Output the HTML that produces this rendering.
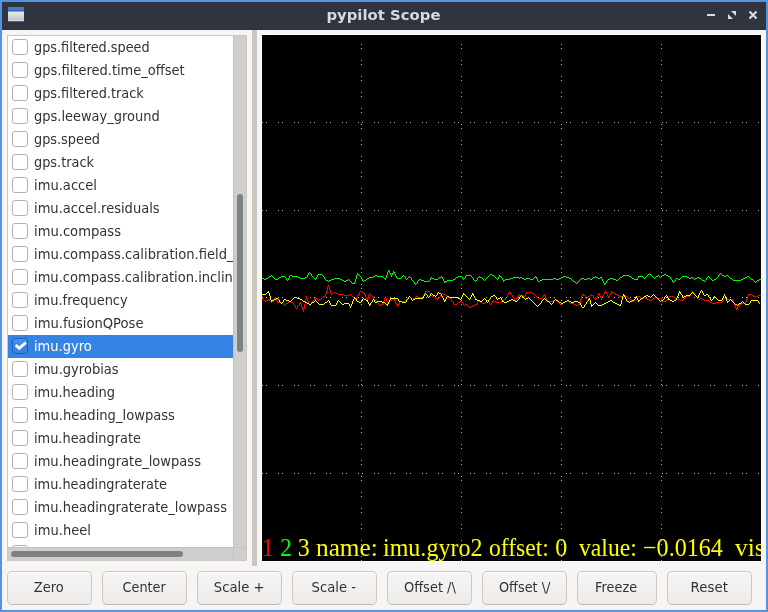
<!DOCTYPE html>
<html lang="en">
<head>
<meta charset="utf-8">
<title>pypilot Scope</title>
<style>
html,body{margin:0;padding:0;}
body{width:768px;height:612px;overflow:hidden;background:#5294e2;position:relative;font-family:"DejaVu Sans","Liberation Sans",sans-serif;font-size:13.33px;color:#2e3436;}
#root{position:absolute;left:0;top:0;width:768px;height:612px;will-change:transform;}
#win{position:absolute;left:2px;top:2px;width:764px;height:608px;background:#f6f5f4;}
#title{position:absolute;left:2px;top:2px;width:764px;height:28px;background:#2f343f;}
#title .t{position:absolute;left:0;right:0;top:0;height:28px;line-height:26px;text-align:center;font-weight:bold;font-size:14.667px;color:#d3dae3;}
#ticon{position:absolute;left:6px;top:5px;width:16px;height:15px;}
.wb{position:absolute;top:0;}
#list{position:absolute;left:7px;top:35px;width:238px;height:524px;border:1px solid #cdc7c2;background:#fff;overflow:hidden;}
#rows{position:absolute;left:0;top:0;width:225px;height:511px;overflow:hidden;background:#fff;}
.row{height:23px;line-height:23px;white-space:nowrap;padding-left:26px;position:relative;}
.row.sel{background:#3584e4;color:#fff;}
.sx{display:inline-block;transform-origin:0 50%;white-space:pre;}
.sx.c{transform-origin:50% 50%;}
.cb{position:absolute;left:4px;top:3px;width:14px;height:14px;border:1px solid #b9b1a9;border-radius:3px;background:#fff;}
.cb.on{background:linear-gradient(#4b93ea,#3584e4 55%);border-color:#1b62b6;}
.cb.on svg{position:absolute;left:-1px;top:-1px;}
#vs{position:absolute;left:225px;top:0;width:12px;height:511px;background:#cecece;border-left:1px solid #c4bfb9;}
#vs i{position:absolute;left:3px;top:158px;width:6px;height:158px;border-radius:3px;background:#7e8182;}
#hs{position:absolute;left:0;top:511px;width:225px;height:12px;background:#cecece;border-top:1px solid #c4bfb9;}
#hs i{position:absolute;left:3px;top:3px;width:172px;height:6px;border-radius:3px;background:#7e8182;}
#corner{position:absolute;left:225px;top:511px;width:12px;height:12px;background:#cecece;border-left:1px solid #c7c2bd;border-top:1px solid #c7c2bd;}
#sash{position:absolute;left:252px;top:30px;width:5px;height:536px;background:#cbc6c0;}
#cv{position:absolute;left:261px;top:34px;width:499px;height:526px;border:1px solid #fff;background:#000;overflow:hidden;}
#cv svg{position:absolute;left:0;top:0;}
#cv .txt span{position:absolute;top:0;display:inline-block;transform-origin:0 22px;white-space:pre;}
#cv .txt{position:absolute;left:0;top:499px;width:499px;height:28px;white-space:pre;font-family:"Liberation Serif",serif;font-size:24px;line-height:28px;color:#ff0;}
.btn{position:absolute;top:571px;height:32px;line-height:31px;text-align:center;border:1px solid #cdc7c2;border-bottom-color:#bfb8b1;border-radius:5px;background:linear-gradient(#f6f5f4,#edebe9);box-sizing:border-box;height:34px;box-shadow:inset 0 1px rgba(255,255,255,0.8);}
</style>
</head>
<body>
<div id="root">
<div id="win"></div>
<div id="title">
<svg id="ticon" viewBox="0 0 16 15"><defs><linearGradient id="g1" x1="0" y1="0" x2="0" y2="1"><stop offset="0" stop-color="#ececec"/><stop offset="0.85" stop-color="#c8c8c8"/><stop offset="1" stop-color="#e4e2dc"/></linearGradient><linearGradient id="g2" x1="0" y1="0" x2="0" y2="1"><stop offset="0" stop-color="#4d7fc6"/><stop offset="1" stop-color="#3a6cb4"/></linearGradient></defs><rect x="0" y="0" width="16" height="15" fill="#3768b0"/><rect x="0" y="0" width="16" height="4.6" fill="url(#g2)"/><rect x="0" y="4.6" width="16" height="9.4" fill="url(#g1)"/></svg>
<div class="t"><span class="sx c" style="transform:translate(-0.8px,0px) scaleX(1.0142)">pypilot Scope</span></div>
<svg class="wb" style="left:700px" width="64" height="28" viewBox="0 0 64 28"><g fill="#d8dde5"><rect x="5" y="12" width="8" height="2"/><path d="M29 9 H34 V14 Z"/><path d="M26 12 V17 H31 Z"/><path d="M47.5 9.5 L54.5 16.5 M54.5 9.5 L47.5 16.5" stroke="#d8dde5" stroke-width="2.1" stroke-linecap="butt" fill="none"/></g></svg>
</div>
<div id="list">
<div id="rows">
<div class="row"><span class="cb"></span><span class="sx" style="transform:translate(0px,0px) scaleX(0.9642)">gps.filtered.speed</span></div>
<div class="row"><span class="cb"></span><span class="sx" style="transform:translate(0px,0px) scaleX(0.9771)">gps.filtered.time_offset</span></div>
<div class="row"><span class="cb"></span><span class="sx" style="transform:translate(0px,0px) scaleX(0.9652)">gps.filtered.track</span></div>
<div class="row"><span class="cb"></span><span class="sx" style="transform:translate(0px,0px) scaleX(0.9743)">gps.leeway_ground</span></div>
<div class="row"><span class="cb"></span><span class="sx" style="transform:translate(0px,0px) scaleX(0.9651)">gps.speed</span></div>
<div class="row"><span class="cb"></span><span class="sx" style="transform:translate(0px,0px) scaleX(0.9671)">gps.track</span></div>
<div class="row"><span class="cb"></span><span class="sx" style="transform:translate(0px,0px) scaleX(0.9825)">imu.accel</span></div>
<div class="row"><span class="cb"></span><span class="sx" style="transform:translate(0px,0px) scaleX(0.9811)">imu.accel.residuals</span></div>
<div class="row"><span class="cb"></span><span class="sx" style="transform:translate(0px,0px) scaleX(0.9843)">imu.compass</span></div>
<div class="row"><span class="cb"></span><span class="sx" style="transform:translate(0px,0px) scaleX(0.9841)">imu.compass.calibration.field_strength</span></div>
<div class="row"><span class="cb"></span><span class="sx" style="transform:translate(0px,0px) scaleX(0.9811)">imu.compass.calibration.inclination</span></div>
<div class="row"><span class="cb"></span><span class="sx" style="transform:translate(0px,0px) scaleX(0.9736)">imu.frequency</span></div>
<div class="row"><span class="cb"></span><span class="sx" style="transform:translate(0px,0px) scaleX(0.9854)">imu.fusionQPose</span></div>
<div class="row sel"><span class="cb on"><svg viewBox="0 0 16 16" width="16" height="16"><path d="M2.7 7.9 L4.5 5.9 L7.2 8.3 L12.9 3.8 L14.9 5.4 L7.2 12.3 Z" fill="#fff"/></svg></span><span class="sx" style="transform:translate(0px,0px) scaleX(0.9769)">imu.gyro</span></div>
<div class="row"><span class="cb"></span><span class="sx" style="transform:translate(0px,0px) scaleX(0.9809)">imu.gyrobias</span></div>
<div class="row"><span class="cb"></span><span class="sx" style="transform:translate(0px,0px) scaleX(0.9726)">imu.heading</span></div>
<div class="row"><span class="cb"></span><span class="sx" style="transform:translate(0px,0px) scaleX(0.9843)">imu.heading_lowpass</span></div>
<div class="row"><span class="cb"></span><span class="sx" style="transform:translate(0px,0px) scaleX(0.9695)">imu.headingrate</span></div>
<div class="row"><span class="cb"></span><span class="sx" style="transform:translate(0px,0px) scaleX(0.9805)">imu.headingrate_lowpass</span></div>
<div class="row"><span class="cb"></span><span class="sx" style="transform:translate(0px,0px) scaleX(0.9676)">imu.headingraterate</span></div>
<div class="row"><span class="cb"></span><span class="sx" style="transform:translate(0px,0px) scaleX(0.9777)">imu.headingraterate_lowpass</span></div>
<div class="row"><span class="cb"></span><span class="sx" style="transform:translate(0px,0px) scaleX(0.9838)">imu.heel</span></div>
<div class="row"><span class="cb"></span><span class="sx" style="transform:translate(0px,0px) scaleX(0.9924)">imu.heel_lowpass</span></div>
</div>
<div id="vs"><i></i></div>
<div id="hs"><i></i></div>
<div id="corner"></div>
</div>
<div id="sash"></div>
<div id="cv">
<svg width="499" height="526" viewBox="0 0 499 526" shape-rendering="crispEdges">
<g fill="none" stroke-width="1">
<path d="M0.5 263v1M1.5 264v1M2.5 265v1M3.5 266v1M4.5 265v1M5.5 265v1M6.5 264v1M7.5 265v1M8.5 266v1M9.5 267v1M10.5 266v1M11.5 264v2M12.5 263v1M13.5 262v2M14.5 264v2M15.5 266v2M16.5 267v1M17.5 267v1M18.5 267v1M19.5 267v1M20.5 268v1M21.5 269v1M22.5 270v1M23.5 269v1M24.5 268v1M25.5 268v1M26.5 267v1M27.5 266v1M28.5 266v1M29.5 267v1M30.5 267v1M31.5 268v2M32.5 270v1M33.5 271v2M34.5 273v1M35.5 271v2M36.5 270v1M37.5 268v2M38.5 267v2M39.5 269v3M40.5 272v3M41.5 274v3M42.5 269v5M43.5 264v5M44.5 261v3M45.5 263v3M46.5 266v3M47.5 269v2M48.5 269v1M49.5 267v2M50.5 266v1M51.5 265v1M52.5 263v2M53.5 262v1M54.5 263v1M55.5 264v1M56.5 265v1M57.5 264v1M58.5 264v1M59.5 263v1M60.5 262v1M61.5 261v1M62.5 261v1M63.5 259v2M64.5 256v3M65.5 252v4M66.5 250v2M67.5 252v3M68.5 255v3M69.5 258v2M70.5 258v1M71.5 258v1M72.5 257v1M73.5 257v1M74.5 258v1M75.5 258v1M76.5 259v1M77.5 259v1M78.5 259v1M79.5 259v1M80.5 259v1M81.5 259v1M82.5 260v1M83.5 260v1M84.5 260v1M85.5 260v1M86.5 260v1M87.5 259v1M88.5 259v1M89.5 260v1M90.5 261v1M91.5 262v1M92.5 263v1M93.5 264v1M94.5 262v2M95.5 261v1M96.5 259v2M97.5 257v2M98.5 256v1M99.5 256v1M100.5 257v1M101.5 257v1M102.5 258v2M103.5 260v2M104.5 262v2M105.5 264v2M106.5 260v4M107.5 258v2M108.5 259v1M109.5 260v1M110.5 261v1M111.5 262v2M112.5 264v1M113.5 265v1M114.5 266v1M115.5 267v1M116.5 268v2M117.5 270v1M118.5 270v1M119.5 269v1M120.5 268v2M121.5 266v2M122.5 263v3M123.5 261v2M124.5 263v4M125.5 267v3M126.5 268v1M127.5 266v2M128.5 265v1M129.5 265v1M130.5 264v1M131.5 264v1M132.5 264v2M133.5 266v2M134.5 268v2M135.5 270v2M136.5 269v2M137.5 267v2M138.5 266v1M139.5 266v1M140.5 266v1M141.5 266v1M142.5 266v1M143.5 265v1M144.5 264v1M145.5 263v1M146.5 262v1M147.5 261v1M148.5 262v1M149.5 263v2M150.5 265v1M151.5 264v1M152.5 263v1M153.5 262v1M154.5 261v1M155.5 261v1M156.5 262v1M157.5 262v1M158.5 262v1M159.5 263v1M160.5 262v2M161.5 260v2M162.5 258v2M163.5 256v2M164.5 256v1M165.5 256v1M166.5 256v1M167.5 257v1M168.5 258v2M169.5 260v1M170.5 261v1M171.5 261v1M172.5 262v1M173.5 263v1M174.5 263v1M175.5 264v1M176.5 263v1M177.5 262v1M178.5 260v2M179.5 259v1M180.5 258v1M181.5 259v1M182.5 259v1M183.5 260v1M184.5 260v1M185.5 261v1M186.5 262v1M187.5 262v1M188.5 263v1M189.5 264v2M190.5 266v1M191.5 267v2M192.5 269v1M193.5 269v1M194.5 269v1M195.5 268v1M196.5 267v1M197.5 267v1M198.5 266v1M199.5 267v1M200.5 267v1M201.5 268v2M202.5 270v1M203.5 269v1M204.5 269v1M205.5 270v1M206.5 271v1M207.5 272v1M208.5 272v1M209.5 271v1M210.5 271v1M211.5 270v1M212.5 270v1M213.5 269v1M214.5 269v1M215.5 267v2M216.5 265v2M217.5 266v1M218.5 267v1M219.5 267v1M220.5 268v1M221.5 268v1M222.5 268v1M223.5 267v1M224.5 266v1M225.5 265v1M226.5 266v1M227.5 267v2M228.5 269v1M229.5 268v1M230.5 266v2M231.5 265v1M232.5 266v1M233.5 266v1M234.5 267v1M235.5 267v1M236.5 267v1M237.5 267v1M238.5 267v1M239.5 266v1M240.5 266v1M241.5 265v1M242.5 264v1M243.5 263v1M244.5 262v1M245.5 260v2M246.5 258v2M247.5 256v2M248.5 257v2M249.5 259v1M250.5 260v2M251.5 262v1M252.5 263v2M253.5 265v1M254.5 263v2M255.5 262v1M256.5 260v2M257.5 259v1M258.5 260v1M259.5 260v1M260.5 260v1M261.5 261v1M262.5 261v1M263.5 259v2M264.5 257v2M265.5 257v1M266.5 257v1M267.5 257v1M268.5 257v1M269.5 257v1M270.5 258v1M271.5 258v1M272.5 259v1M273.5 260v1M274.5 261v1M275.5 262v1M276.5 263v1M277.5 263v1M278.5 263v1M279.5 263v1M280.5 262v1M281.5 260v2M282.5 259v2M283.5 261v2M284.5 263v2M285.5 265v2M286.5 266v1M287.5 266v1M288.5 266v1M289.5 266v1M290.5 266v1M291.5 265v1M292.5 265v1M293.5 264v1M294.5 265v1M295.5 266v1M296.5 267v1M297.5 268v1M298.5 269v1M299.5 268v1M300.5 268v1M301.5 267v1M302.5 267v1M303.5 266v1M304.5 266v1M305.5 265v1M306.5 266v1M307.5 267v1M308.5 268v1M309.5 268v1M310.5 268v1M311.5 268v1M312.5 269v1M313.5 269v1M314.5 270v1M315.5 270v1M316.5 269v1M317.5 268v2M318.5 264v4M319.5 261v3M320.5 259v2M321.5 259v1M322.5 260v1M323.5 261v2M324.5 263v1M325.5 262v1M326.5 261v1M327.5 261v1M328.5 260v1M329.5 259v1M330.5 260v1M331.5 261v2M332.5 263v1M333.5 264v1M334.5 262v2M335.5 260v2M336.5 258v2M337.5 259v2M338.5 261v2M339.5 263v2M340.5 261v2M341.5 259v2M342.5 257v2M343.5 255v2M344.5 257v2M345.5 259v2M346.5 261v2M347.5 260v2M348.5 258v2M349.5 256v2M350.5 257v1M351.5 257v1M352.5 258v1M353.5 259v1M354.5 259v1M355.5 260v1M356.5 260v1M357.5 261v1M358.5 261v1M359.5 262v1M360.5 262v1M361.5 262v1M362.5 261v1M363.5 261v1M364.5 261v1M365.5 262v1M366.5 263v1M367.5 263v1M368.5 264v1M369.5 265v1M370.5 266v1M371.5 266v1M372.5 265v1M373.5 263v2M374.5 262v1M375.5 261v1M376.5 261v1M377.5 261v1M378.5 262v2M379.5 264v1M380.5 263v1M381.5 263v1M382.5 262v1M383.5 263v1M384.5 263v1M385.5 264v1M386.5 264v1M387.5 265v1M388.5 265v1M389.5 265v1M390.5 264v1M391.5 263v1M392.5 263v1M393.5 262v1M394.5 262v1M395.5 263v1M396.5 263v1M397.5 263v1M398.5 263v1M399.5 264v2M400.5 266v1M401.5 266v1M402.5 266v1M403.5 266v1M404.5 265v1M405.5 263v2M406.5 262v1M407.5 261v1M408.5 261v1M409.5 261v1M410.5 261v1M411.5 261v1M412.5 262v1M413.5 263v1M414.5 263v1M415.5 264v1M416.5 264v1M417.5 264v1M418.5 265v1M419.5 265v1M420.5 265v1M421.5 264v1M422.5 263v1M423.5 262v1M424.5 261v1M425.5 261v1M426.5 261v1M427.5 261v1M428.5 259v2M429.5 257v2M430.5 256v1M431.5 257v1M432.5 258v2M433.5 260v1M434.5 261v1M435.5 262v2M436.5 264v1M437.5 264v1M438.5 263v1M439.5 263v1M440.5 264v1M441.5 264v1M442.5 265v1M443.5 265v1M444.5 265v1M445.5 265v1M446.5 265v1M447.5 266v1M448.5 267v1M449.5 267v1M450.5 268v1M451.5 268v1M452.5 268v1M453.5 268v1M454.5 267v1M455.5 267v1M456.5 267v1M457.5 267v1M458.5 267v1M459.5 267v1M460.5 266v1M461.5 264v2M462.5 263v1M463.5 263v1M464.5 264v1M465.5 264v1M466.5 264v1M467.5 264v1M468.5 264v1M469.5 264v1M470.5 264v2M471.5 266v2M472.5 268v3M473.5 271v2M474.5 273v2M475.5 272v2M476.5 270v2M477.5 269v1M478.5 269v1M479.5 268v1M480.5 268v1M481.5 268v1M482.5 268v1M483.5 267v2M484.5 264v3M485.5 261v3M486.5 259v2M487.5 259v1M488.5 259v1M489.5 259v1M490.5 260v1M491.5 261v1M492.5 261v1M493.5 262v1M494.5 261v1M495.5 261v1M496.5 260v1M497.5 260v1M498.5 260v1" stroke="#f00"/>
<path d="M0.5 243v1M1.5 243v1M2.5 244v1M3.5 244v1M4.5 243v1M5.5 243v1M6.5 242v1M7.5 241v1M8.5 241v1M9.5 240v1M10.5 241v1M11.5 242v1M12.5 243v1M13.5 244v1M14.5 244v1M15.5 244v1M16.5 243v1M17.5 242v1M18.5 242v1M19.5 241v1M20.5 241v1M21.5 241v1M22.5 241v1M23.5 242v1M24.5 243v2M25.5 245v1M26.5 243v2M27.5 241v2M28.5 240v1M29.5 240v1M30.5 241v1M31.5 241v1M32.5 241v1M33.5 241v1M34.5 241v1M35.5 241v1M36.5 242v1M37.5 242v1M38.5 243v1M39.5 243v1M40.5 243v1M41.5 243v1M42.5 243v1M43.5 242v1M44.5 242v1M45.5 240v2M46.5 238v2M47.5 237v1M48.5 238v1M49.5 239v2M50.5 241v1M51.5 242v1M52.5 243v1M53.5 244v1M54.5 242v2M55.5 240v2M56.5 239v1M57.5 239v1M58.5 239v1M59.5 239v1M60.5 240v1M61.5 241v1M62.5 242v2M63.5 244v1M64.5 245v1M65.5 245v1M66.5 246v1M67.5 245v1M68.5 245v1M69.5 244v1M70.5 244v1M71.5 244v1M72.5 243v1M73.5 243v1M74.5 243v1M75.5 243v1M76.5 243v1M77.5 243v1M78.5 244v1M79.5 244v1M80.5 245v1M81.5 245v1M82.5 246v1M83.5 246v1M84.5 245v1M85.5 245v1M86.5 244v1M87.5 245v1M88.5 246v1M89.5 247v1M90.5 248v1M91.5 248v1M92.5 247v2M93.5 244v3M94.5 240v4M95.5 238v2M96.5 239v1M97.5 240v1M98.5 241v1M99.5 242v2M100.5 244v2M101.5 246v1M102.5 245v1M103.5 245v1M104.5 244v1M105.5 243v1M106.5 243v1M107.5 242v1M108.5 242v1M109.5 242v1M110.5 242v1M111.5 241v1M112.5 241v1M113.5 240v1M114.5 240v1M115.5 241v1M116.5 241v1M117.5 241v1M118.5 241v1M119.5 241v1M120.5 241v1M121.5 242v1M122.5 243v1M123.5 243v2M124.5 240v3M125.5 237v3M126.5 235v2M127.5 236v2M128.5 238v2M129.5 240v2M130.5 238v2M131.5 236v2M132.5 237v2M133.5 239v2M134.5 241v2M135.5 243v1M136.5 243v1M137.5 243v1M138.5 243v1M139.5 242v1M140.5 241v1M141.5 240v1M142.5 241v1M143.5 242v2M144.5 244v1M145.5 243v1M146.5 242v1M147.5 241v1M148.5 242v1M149.5 243v2M150.5 245v1M151.5 246v1M152.5 247v2M153.5 249v1M154.5 248v1M155.5 246v2M156.5 245v1M157.5 244v1M158.5 244v1M159.5 245v1M160.5 245v1M161.5 245v1M162.5 246v1M163.5 246v1M164.5 246v1M165.5 246v1M166.5 246v1M167.5 245v1M168.5 243v2M169.5 242v1M170.5 243v1M171.5 243v1M172.5 244v1M173.5 244v1M174.5 244v1M175.5 244v1M176.5 243v1M177.5 242v1M178.5 242v1M179.5 241v1M180.5 242v2M181.5 244v2M182.5 246v2M183.5 246v1M184.5 246v1M185.5 245v1M186.5 245v1M187.5 245v1M188.5 245v1M189.5 245v1M190.5 245v1M191.5 244v1M192.5 244v1M193.5 243v1M194.5 242v1M195.5 242v1M196.5 241v1M197.5 241v1M198.5 241v1M199.5 241v1M200.5 242v2M201.5 244v1M202.5 243v1M203.5 241v2M204.5 240v1M205.5 240v1M206.5 240v1M207.5 240v1M208.5 240v1M209.5 241v1M210.5 242v1M211.5 243v2M212.5 245v1M213.5 246v1M214.5 245v1M215.5 243v2M216.5 242v1M217.5 241v1M218.5 242v1M219.5 242v1M220.5 243v1M221.5 244v1M222.5 245v1M223.5 244v1M224.5 243v1M225.5 242v1M226.5 241v1M227.5 240v1M228.5 239v1M229.5 239v1M230.5 240v1M231.5 240v1M232.5 241v1M233.5 242v1M234.5 243v1M235.5 244v1M236.5 242v2M237.5 240v2M238.5 241v1M239.5 242v1M240.5 243v2M241.5 245v2M242.5 245v1M243.5 244v1M244.5 244v1M245.5 244v1M246.5 244v1M247.5 244v1M248.5 243v1M249.5 243v1M250.5 243v1M251.5 242v1M252.5 242v1M253.5 242v1M254.5 242v1M255.5 242v1M256.5 242v1M257.5 243v1M258.5 242v1M259.5 242v1M260.5 243v1M261.5 243v1M262.5 244v1M263.5 244v1M264.5 243v1M265.5 243v1M266.5 243v1M267.5 243v1M268.5 244v1M269.5 244v1M270.5 244v1M271.5 243v1M272.5 242v1M273.5 241v1M274.5 242v2M275.5 244v2M276.5 246v1M277.5 246v1M278.5 245v1M279.5 245v1M280.5 244v1M281.5 244v1M282.5 244v1M283.5 244v1M284.5 244v1M285.5 244v1M286.5 244v1M287.5 244v1M288.5 244v1M289.5 244v1M290.5 244v1M291.5 243v1M292.5 243v1M293.5 243v1M294.5 244v1M295.5 244v1M296.5 244v1M297.5 243v1M298.5 243v1M299.5 242v1M300.5 242v1M301.5 241v1M302.5 241v1M303.5 241v1M304.5 242v1M305.5 242v1M306.5 242v1M307.5 243v1M308.5 243v1M309.5 244v1M310.5 245v1M311.5 246v1M312.5 246v1M313.5 247v1M314.5 248v1M315.5 247v1M316.5 246v1M317.5 245v1M318.5 244v1M319.5 243v1M320.5 243v1M321.5 243v1M322.5 244v1M323.5 244v1M324.5 244v1M325.5 243v1M326.5 243v1M327.5 243v1M328.5 244v1M329.5 244v1M330.5 243v1M331.5 242v1M332.5 242v1M333.5 241v1M334.5 242v1M335.5 242v1M336.5 243v1M337.5 243v1M338.5 242v1M339.5 242v2M340.5 244v2M341.5 246v2M342.5 248v2M343.5 248v1M344.5 246v2M345.5 245v1M346.5 244v1M347.5 244v1M348.5 243v1M349.5 243v1M350.5 243v1M351.5 244v1M352.5 244v1M353.5 244v1M354.5 245v1M355.5 245v1M356.5 244v1M357.5 243v1M358.5 242v1M359.5 242v1M360.5 241v1M361.5 240v1M362.5 240v1M363.5 240v1M364.5 240v1M365.5 240v1M366.5 240v1M367.5 241v1M368.5 241v1M369.5 242v1M370.5 243v1M371.5 243v1M372.5 244v1M373.5 244v1M374.5 244v1M375.5 243v2M376.5 241v2M377.5 241v1M378.5 241v1M379.5 241v1M380.5 241v1M381.5 242v1M382.5 243v1M383.5 242v1M384.5 241v1M385.5 240v1M386.5 239v1M387.5 239v1M388.5 239v1M389.5 240v1M390.5 241v1M391.5 242v1M392.5 243v1M393.5 242v1M394.5 241v1M395.5 241v1M396.5 240v1M397.5 241v1M398.5 242v1M399.5 241v1M400.5 240v1M401.5 240v1M402.5 239v1M403.5 239v1M404.5 240v1M405.5 240v1M406.5 241v1M407.5 241v1M408.5 242v2M409.5 244v1M410.5 245v2M411.5 247v1M412.5 246v1M413.5 244v2M414.5 243v1M415.5 243v1M416.5 244v1M417.5 244v1M418.5 243v1M419.5 242v1M420.5 241v1M421.5 241v1M422.5 241v1M423.5 241v1M424.5 241v1M425.5 242v1M426.5 242v1M427.5 243v1M428.5 243v1M429.5 242v1M430.5 242v1M431.5 243v1M432.5 244v1M433.5 243v1M434.5 243v1M435.5 242v1M436.5 242v1M437.5 243v1M438.5 243v1M439.5 244v1M440.5 245v1M441.5 245v1M442.5 246v1M443.5 245v1M444.5 243v2M445.5 242v1M446.5 241v1M447.5 242v1M448.5 243v1M449.5 244v1M450.5 245v1M451.5 245v1M452.5 244v1M453.5 244v1M454.5 243v1M455.5 242v1M456.5 240v2M457.5 239v1M458.5 238v1M459.5 239v1M460.5 240v1M461.5 240v1M462.5 241v1M463.5 241v1M464.5 240v1M465.5 240v1M466.5 241v1M467.5 242v1M468.5 243v1M469.5 243v1M470.5 244v1M471.5 245v1M472.5 245v1M473.5 245v1M474.5 245v1M475.5 245v1M476.5 245v1M477.5 245v1M478.5 245v1M479.5 244v1M480.5 244v1M481.5 243v1M482.5 243v1M483.5 242v1M484.5 242v1M485.5 241v1M486.5 241v1M487.5 242v1M488.5 243v1M489.5 244v1M490.5 244v1M491.5 245v1M492.5 246v1M493.5 247v1M494.5 246v1M495.5 245v1M496.5 245v1M497.5 244v1M498.5 244v1" stroke="#0f0"/>
<path d="M0.5 259v1M1.5 259v1M2.5 259v1M3.5 259v1M4.5 258v1M5.5 257v1M6.5 256v2M7.5 258v3M8.5 261v4M9.5 265v2M10.5 265v1M11.5 265v1M12.5 264v1M13.5 264v1M14.5 263v1M15.5 263v1M16.5 264v1M17.5 265v2M18.5 267v1M19.5 268v1M20.5 267v1M21.5 265v2M22.5 264v1M23.5 264v1M24.5 265v1M25.5 265v1M26.5 265v1M27.5 266v1M28.5 266v1M29.5 265v1M30.5 264v1M31.5 263v1M32.5 262v1M33.5 262v1M34.5 262v1M35.5 263v1M36.5 263v1M37.5 263v1M38.5 264v1M39.5 264v1M40.5 265v1M41.5 266v1M42.5 266v1M43.5 267v1M44.5 267v1M45.5 268v1M46.5 268v1M47.5 269v1M48.5 269v1M49.5 268v1M50.5 267v1M51.5 267v1M52.5 266v1M53.5 265v1M54.5 266v1M55.5 267v1M56.5 268v1M57.5 269v1M58.5 269v1M59.5 269v1M60.5 269v1M61.5 269v1M62.5 268v1M63.5 267v1M64.5 267v1M65.5 266v1M66.5 265v1M67.5 266v2M68.5 268v2M69.5 270v1M70.5 270v1M71.5 270v1M72.5 270v1M73.5 270v1M74.5 268v2M75.5 266v2M76.5 265v1M77.5 266v1M78.5 267v1M79.5 268v1M80.5 269v1M81.5 269v1M82.5 268v1M83.5 268v1M84.5 268v1M85.5 268v1M86.5 268v1M87.5 269v2M88.5 271v2M89.5 269v2M90.5 266v3M91.5 264v2M92.5 262v2M93.5 263v1M94.5 264v2M95.5 266v1M96.5 266v1M97.5 267v1M98.5 267v1M99.5 266v1M100.5 264v2M101.5 263v1M102.5 264v1M103.5 264v1M104.5 265v1M105.5 265v2M106.5 267v2M107.5 269v2M108.5 268v2M109.5 267v1M110.5 265v2M111.5 264v1M112.5 265v2M113.5 267v1M114.5 267v1M115.5 266v1M116.5 266v1M117.5 266v1M118.5 266v1M119.5 266v1M120.5 267v1M121.5 267v1M122.5 267v1M123.5 268v1M124.5 269v1M125.5 269v2M126.5 267v2M127.5 265v2M128.5 263v2M129.5 263v1M130.5 263v1M131.5 263v1M132.5 263v1M133.5 263v1M134.5 263v1M135.5 263v1M136.5 264v2M137.5 266v1M138.5 266v1M139.5 266v1M140.5 267v1M141.5 267v1M142.5 267v1M143.5 267v1M144.5 265v2M145.5 264v1M146.5 262v2M147.5 261v1M148.5 262v1M149.5 263v2M150.5 265v1M151.5 264v1M152.5 264v1M153.5 263v1M154.5 263v1M155.5 263v1M156.5 263v1M157.5 263v1M158.5 263v1M159.5 263v1M160.5 263v1M161.5 261v2M162.5 259v2M163.5 258v1M164.5 259v1M165.5 260v2M166.5 262v1M167.5 261v1M168.5 259v2M169.5 258v1M170.5 259v1M171.5 260v1M172.5 260v1M173.5 261v1M174.5 260v1M175.5 258v2M176.5 257v1M177.5 258v1M178.5 258v1M179.5 259v2M180.5 261v2M181.5 263v2M182.5 265v2M183.5 264v2M184.5 262v2M185.5 261v1M186.5 261v1M187.5 262v1M188.5 262v1M189.5 262v1M190.5 262v1M191.5 262v1M192.5 262v1M193.5 262v1M194.5 262v1M195.5 262v1M196.5 263v1M197.5 263v1M198.5 264v1M199.5 262v2M200.5 260v2M201.5 258v2M202.5 259v1M203.5 260v1M204.5 261v1M205.5 262v1M206.5 263v1M207.5 264v1M208.5 262v2M209.5 260v2M210.5 258v2M211.5 259v2M212.5 261v2M213.5 263v2M214.5 264v1M215.5 265v1M216.5 265v1M217.5 265v1M218.5 266v1M219.5 266v1M220.5 265v1M221.5 264v1M222.5 263v1M223.5 264v1M224.5 265v2M225.5 267v1M226.5 265v2M227.5 264v1M228.5 262v2M229.5 261v1M230.5 261v1M231.5 260v1M232.5 260v1M233.5 261v1M234.5 262v2M235.5 264v1M236.5 263v1M237.5 263v1M238.5 262v1M239.5 263v2M240.5 265v2M241.5 266v1M242.5 267v1M243.5 267v1M244.5 267v1M245.5 266v1M246.5 266v1M247.5 265v1M248.5 265v1M249.5 264v1M250.5 264v1M251.5 265v1M252.5 265v1M253.5 266v1M254.5 266v1M255.5 265v1M256.5 264v1M257.5 262v2M258.5 261v1M259.5 260v1M260.5 261v1M261.5 262v1M262.5 263v1M263.5 264v1M264.5 263v1M265.5 263v1M266.5 262v1M267.5 263v1M268.5 264v1M269.5 265v1M270.5 266v1M271.5 267v1M272.5 268v1M273.5 269v1M274.5 270v1M275.5 271v1M276.5 270v1M277.5 269v1M278.5 268v1M279.5 266v2M280.5 265v1M281.5 264v1M282.5 263v1M283.5 264v1M284.5 265v1M285.5 266v1M286.5 266v1M287.5 267v1M288.5 268v1M289.5 269v1M290.5 268v1M291.5 266v2M292.5 265v1M293.5 264v1M294.5 265v1M295.5 265v1M296.5 266v1M297.5 267v1M298.5 267v1M299.5 268v1M300.5 268v1M301.5 267v1M302.5 267v1M303.5 266v1M304.5 266v1M305.5 265v1M306.5 265v1M307.5 266v1M308.5 266v1M309.5 267v1M310.5 267v1M311.5 267v1M312.5 266v1M313.5 266v1M314.5 266v1M315.5 266v1M316.5 267v1M317.5 267v1M318.5 268v2M319.5 270v2M320.5 272v1M321.5 272v1M322.5 270v2M323.5 269v1M324.5 267v2M325.5 266v1M326.5 264v2M327.5 263v2M328.5 265v4M329.5 269v3M330.5 270v1M331.5 269v1M332.5 268v1M333.5 267v1M334.5 268v1M335.5 269v1M336.5 270v1M337.5 270v1M338.5 270v1M339.5 270v1M340.5 269v1M341.5 269v1M342.5 268v1M343.5 268v1M344.5 267v1M345.5 267v1M346.5 266v1M347.5 266v1M348.5 265v1M349.5 265v1M350.5 266v1M351.5 267v1M352.5 267v1M353.5 268v1M354.5 268v1M355.5 269v1M356.5 269v1M357.5 270v1M358.5 269v2M359.5 265v4M360.5 261v4M361.5 259v2M362.5 260v2M363.5 262v2M364.5 264v2M365.5 266v1M366.5 266v1M367.5 267v1M368.5 266v1M369.5 266v1M370.5 265v1M371.5 265v1M372.5 264v1M373.5 262v2M374.5 261v2M375.5 263v2M376.5 265v2M377.5 265v1M378.5 264v1M379.5 263v1M380.5 263v1M381.5 262v1M382.5 261v1M383.5 261v1M384.5 260v1M385.5 260v1M386.5 261v1M387.5 261v1M388.5 262v1M389.5 261v1M390.5 260v1M391.5 259v1M392.5 260v1M393.5 261v1M394.5 262v1M395.5 263v1M396.5 264v1M397.5 265v1M398.5 266v1M399.5 265v1M400.5 265v1M401.5 264v1M402.5 262v2M403.5 261v1M404.5 260v1M405.5 261v2M406.5 263v2M407.5 264v1M408.5 265v1M409.5 265v1M410.5 266v1M411.5 266v1M412.5 265v1M413.5 265v1M414.5 263v2M415.5 261v2M416.5 258v3M417.5 256v2M418.5 257v2M419.5 259v1M420.5 260v2M421.5 262v1M422.5 261v1M423.5 261v1M424.5 260v1M425.5 260v1M426.5 260v1M427.5 260v1M428.5 259v1M429.5 258v1M430.5 257v1M431.5 258v1M432.5 259v1M433.5 260v1M434.5 261v1M435.5 262v1M436.5 260v2M437.5 258v2M438.5 256v2M439.5 255v1M440.5 256v2M441.5 258v2M442.5 260v1M443.5 260v1M444.5 259v1M445.5 259v1M446.5 260v2M447.5 262v1M448.5 263v2M449.5 265v1M450.5 264v1M451.5 262v2M452.5 261v1M453.5 262v1M454.5 263v1M455.5 264v1M456.5 265v1M457.5 265v1M458.5 265v1M459.5 265v1M460.5 263v2M461.5 261v2M462.5 259v2M463.5 261v2M464.5 263v3M465.5 266v2M466.5 266v1M467.5 265v1M468.5 264v1M469.5 265v1M470.5 266v1M471.5 267v1M472.5 268v1M473.5 269v1M474.5 269v1M475.5 270v1M476.5 269v1M477.5 268v1M478.5 268v1M479.5 267v1M480.5 266v1M481.5 267v1M482.5 268v1M483.5 269v1M484.5 269v1M485.5 269v1M486.5 269v1M487.5 268v1M488.5 266v2M489.5 265v1M490.5 265v1M491.5 265v1M492.5 265v1M493.5 265v1M494.5 265v1M495.5 265v1M496.5 266v2M497.5 268v1" stroke="#ff0"/>
</g>
<g stroke="#b4b4b4" stroke-width="1" fill="none">
<line x1="0" y1="87.5" x2="499" y2="87.5" stroke-dasharray="1 3 1 11"/>
<line x1="0" y1="175.5" x2="499" y2="175.5" stroke-dasharray="1 3 1 11"/>
<line x1="0" y1="262.5" x2="499" y2="262.5" stroke-dasharray="1 3 1 11"/>
<line x1="0" y1="350.5" x2="499" y2="350.5" stroke-dasharray="1 3 1 11"/>
<line x1="0" y1="438.5" x2="499" y2="438.5" stroke-dasharray="1 3 1 11"/>
<line x1="99.5" y1="9" x2="99.5" y2="526" stroke-dasharray="1 3 1 11"/>
<line x1="199.5" y1="9" x2="199.5" y2="526" stroke-dasharray="1 3 1 11"/>
<line x1="299.5" y1="9" x2="299.5" y2="526" stroke-dasharray="1 3 1 11"/>
<line x1="399.5" y1="9" x2="399.5" y2="526" stroke-dasharray="1 3 1 11"/>
</g>
</svg>
<div class="txt"><span style="left:-0.2px;transform:scale(1.0000,1.065);color:#f00">1</span> <span style="left:18.1px;transform:scale(1.0000,1.065);color:#0f0">2</span> <span style="left:35.8px;transform:scale(1.0000,1.065)">3</span> <span style="left:53.7px;transform:scale(1.0536,1.065)">name:</span> <span style="left:121.2px;transform:scale(1.0010,1.065)">imu.gyro2</span> <span style="left:227.3px;transform:scale(0.9828,1.065)">offset:</span> <span style="left:293.2px;transform:scale(1.0000,1.065)">0</span> <span style="left:317.0px;transform:scale(0.9877,1.065)">value:</span> <span style="left:380.7px;transform:scale(1.0038,1.065)">−0.0164</span> <span style="left:473.3px;transform:scale(1.0600,1.065)">visible: True</span></div>
</div>
<div class="btn" style="left:7px;width:85px"><span class="sx c" style="transform:translate(-0.64px,0px) scaleX(0.9782)">Zero</span></div>
<div class="btn" style="left:102px;width:85px"><span class="sx c" style="transform:translate(-0.31px,0px) scaleX(0.9631)">Center</span></div>
<div class="btn" style="left:197px;width:85px"><span class="sx c" style="transform:translate(-0.49px,0px) scaleX(0.9900)">Scale +</span></div>
<div class="btn" style="left:292px;width:85px"><span class="sx c" style="transform:translate(-0.61px,0px) scaleX(0.9910)">Scale -</span></div>
<div class="btn" style="left:387px;width:85px"><span class="sx c" style="transform:translate(0.26px,0px) scaleX(0.9756)">Offset /\</span></div>
<div class="btn" style="left:482px;width:85px"><span class="sx c" style="transform:translate(0.01px,0px) scaleX(0.9661)">Offset \/</span></div>
<div class="btn" style="left:577px;width:80px"><span class="sx c" style="transform:translate(-0.66px,0px) scaleX(0.9651)">Freeze</span></div>
<div class="btn" style="left:667px;width:85px"><span class="sx c" style="transform:translate(-0.37px,0px) scaleX(1.0009)">Reset</span></div>
</div>
</body>
</html>
